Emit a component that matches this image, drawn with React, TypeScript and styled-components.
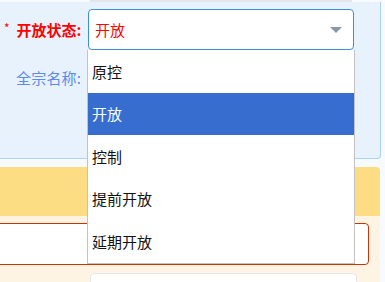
import React from 'react'
import styled, { createGlobalStyle } from 'styled-components'

const GlobalStyle = createGlobalStyle`
  html, body {
    margin: 0;
    padding: 0;
    background: #f7fafe;
    font-family: "Noto Sans CJK SC", "Liberation Sans", sans-serif;
    overflow: hidden;
  }
`

const options = ['原控', '开放', '控制', '提前开放', '延期开放']

const App: React.FC = () => {
  return (
    <>
      <GlobalStyle />
      <Page>
        <TopStrip />
        <FormPanel>
          <FormRow>
            <Label $required>
              <Star>*</Star>开放状态:
            </Label>
            <SelectWrap>
              <SelectBox>
                <span>开放</span>
                <Caret />
              </SelectBox>
              <OptionList>
                {options.map((o) => (
                  <Option key={o} $active={o === '开放'}>
                    {o}
                  </Option>
                ))}
              </OptionList>
            </SelectWrap>
          </FormRow>
          <FormRow>
            <Label>全宗名称:</Label>
          </FormRow>
        </FormPanel>
        <Card>
          <CardHeader />
          <CardBody>
            <RedInput />
            <WhiteBox />
          </CardBody>
        </Card>
      </Page>
    </>
  )
}

const Page = styled.div`
  width: 385px;
  height: 282px;
  display: flex;
  flex-direction: column;
  overflow: hidden;
  & > * {
    flex-shrink: 0;
  }
`
const TopStrip = styled.div`
  margin-left: 90px;
  width: 262px;
  height: 2px;
  background: #e3e5e8;
`
const FormPanel = styled.div`
  width: 381px;
  height: 157px;
  background: #e8f2fd;
  border-right: 1px solid #a9d3f7;
  border-bottom: 1px solid #a9d3f7;
  border-bottom-right-radius: 4px;
  padding-top: 7px;
  box-sizing: border-box;
  display: flex;
  flex-direction: column;
`
const FormRow = styled.div`
  display: flex;
  flex-direction: row;
  align-items: center;
  height: 41px;
  margin-bottom: 7px;
`
const Label = styled.div<{ $required?: boolean }>`
  width: 88px;
  box-sizing: border-box;
  padding-left: ${(p) => (p.$required ? '4px' : '16px')};
  font-size: 15px;
  font-weight: ${(p) => (p.$required ? 700 : 400)};
  color: ${(p) => (p.$required ? '#ff0000' : '#5b8be6')};
  white-space: nowrap;
  letter-spacing: ${(p) => (p.$required ? '0' : '0.2px')};
`
const Star = styled.span`
  font-size: 12px;
  font-weight: 400;
  margin-right: 7px;
  position: relative;
  top: -3px;
`
const SelectWrap = styled.div`
  position: relative;
`
const SelectBox = styled.div`
  width: 266px;
  height: 41px;
  box-sizing: border-box;
  background: #ffffff;
  border: 1px solid #3d8fd8;
  border-radius: 4px;
  display: flex;
  align-items: center;
  justify-content: space-between;
  padding: 0 11px 0 6px;
  font-size: 15px;
  color: #ff0000;
`
const Caret = styled.div`
  width: 0;
  height: 0;
  border-left: 6px solid transparent;
  border-right: 6px solid transparent;
  border-top: 6px solid #8a97a8;
`
const OptionList = styled.div`
  position: absolute;
  top: 41px;
  left: -1px;
  width: 268px;
  box-sizing: border-box;
  background: #ffffff;
  border: 1px solid #c2c2c2;
  border-top: none;
  z-index: 10;
`
const Option = styled.div<{ $active?: boolean }>`
  height: 42.5px;
  display: flex;
  align-items: center;
  padding-left: 4px;
  font-size: 15px;
  color: ${(p) => (p.$active ? '#ffffff' : '#111111')};
  background: ${(p) => (p.$active ? '#386dd0' : '#ffffff')};
`
const Card = styled.div`
  margin-top: 8px;
  width: 380px;
  height: 120px;
  border-top-right-radius: 4px;
  overflow: hidden;
  display: flex;
  flex-direction: column;
`
const CardHeader = styled.div`
  flex-shrink: 0;
  height: 49px;
  background: #fddd84;
`
const CardBody = styled.div`
  flex: 1;
  background: #fdf4e3;
  padding-top: 7px;
  display: flex;
  flex-direction: column;
  & > * {
    flex-shrink: 0;
  }
`
const RedInput = styled.div`
  margin-left: -10px;
  width: 379px;
  height: 42px;
  box-sizing: border-box;
  background: #ffffff;
  border: 1px solid #cc3300;
  border-radius: 4px;
`
const WhiteBox = styled.div`
  margin-top: 8px;
  margin-left: 90px;
  width: 265px;
  height: 30px;
  background: #ffffff;
  border: 1px solid #e6e6e6;
  border-radius: 4px;
`

export default App
